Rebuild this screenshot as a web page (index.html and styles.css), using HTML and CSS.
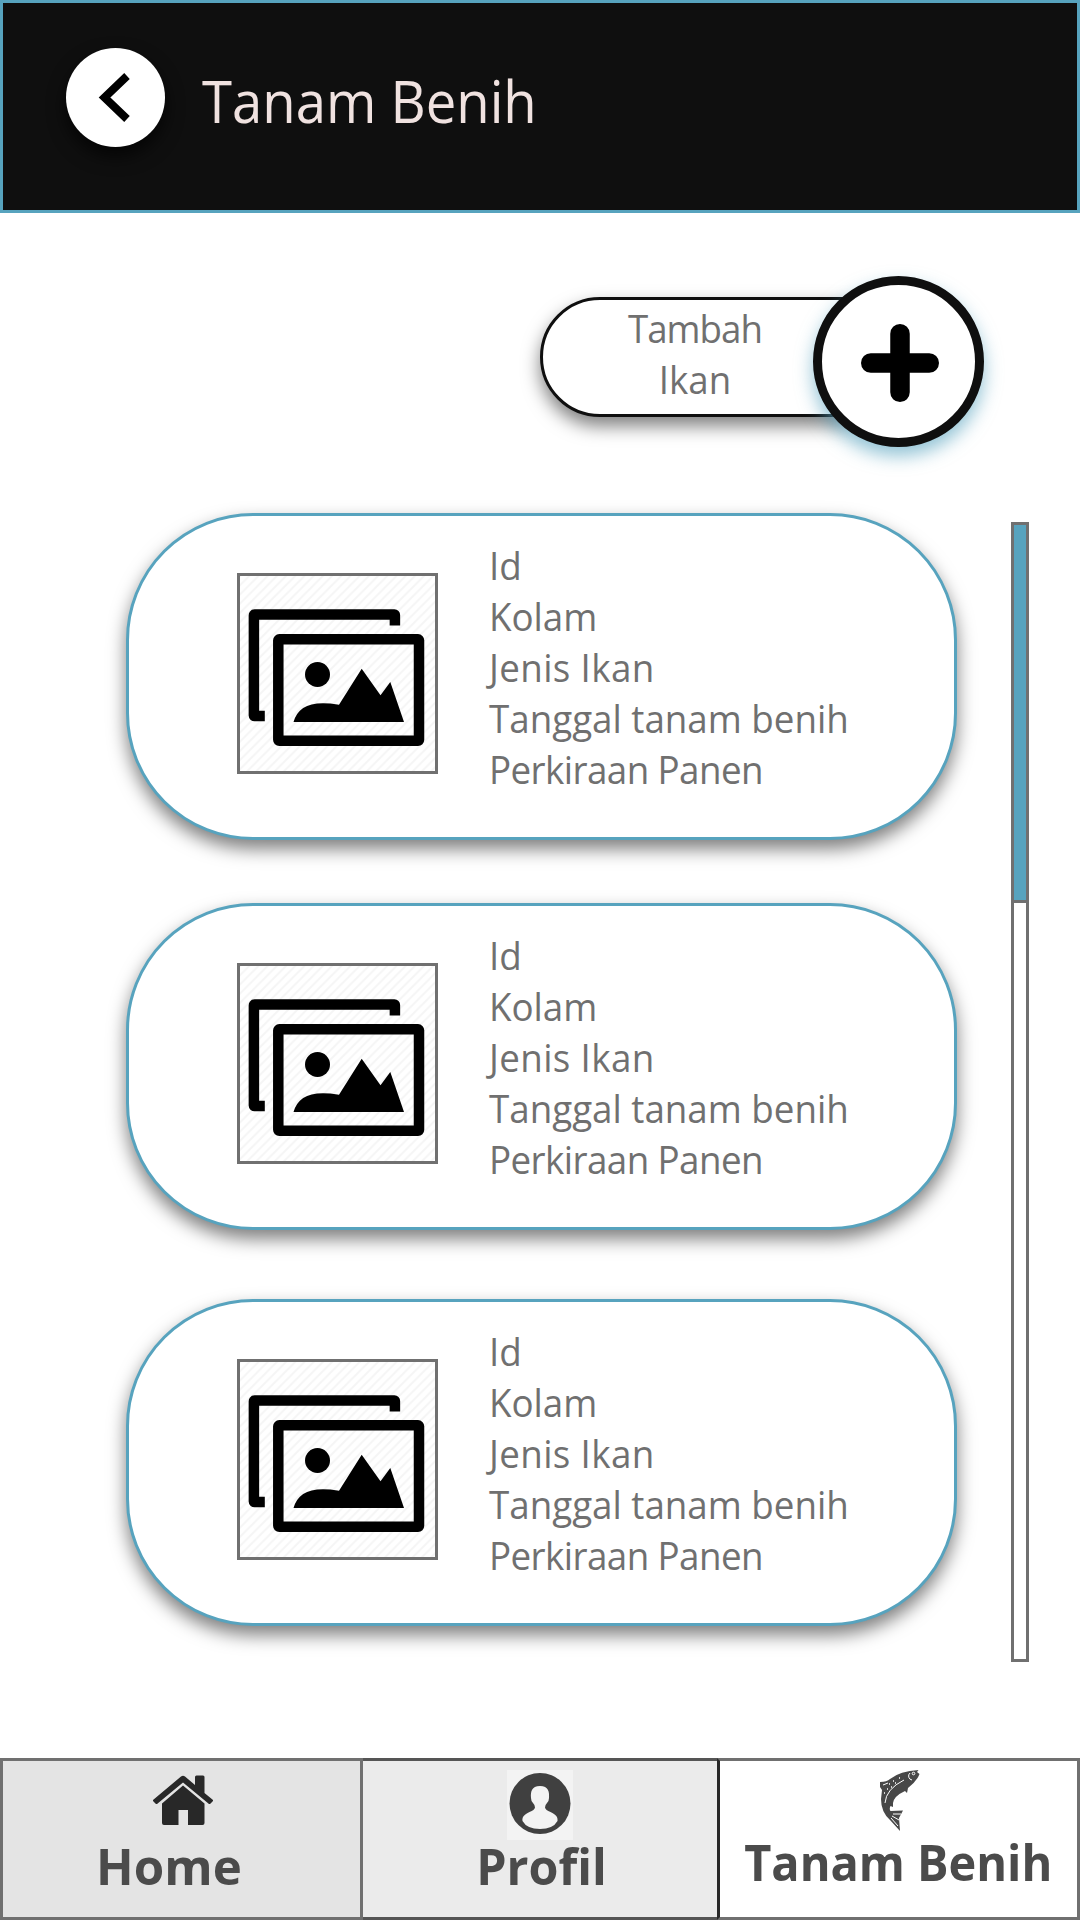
FILE: index.html
```html
<!DOCTYPE html>
<html lang="id">
<head>
<meta charset="utf-8">
<title>Tanam Benih</title>
<link rel="stylesheet" href="styles.css">
</head>
<body>
<svg class="defs" width="0" height="0">
  <defs>
    <pattern id="stripes" width="9.2" height="9.2" patternUnits="userSpaceOnUse">
      <path d="M-2 2L2-2M0 9.2L9.2 0M7.2 11.2L11.2 7.2" stroke="#f5f5f5" stroke-width="2"/>
    </pattern>
    <symbol id="gallery" viewBox="0 0 195 195">
      <rect width="195" height="195" fill="url(#stripes)"/>
      <path d="M154.900 49.500V39Q154.900 38.500 154.400 38.500H14.600Q13.900 38.500 13.900 39.500V139.500Q13.900 140 14.500 140H24.800" fill="none" stroke="#000" stroke-width="10.500" stroke-linejoin="round"/>
      <rect x="38.300" y="63.300" width="140.700" height="101.500" rx="1" fill="none" stroke="#000" stroke-width="10.500" stroke-linejoin="round"/>
      <circle cx="77.500" cy="98.500" r="12.500"/>
      <path d="M53.500 146C57 134 66 127.300 83 127.300Q90 127.300 99 128.700L121.700 92.700L140.500 119.300L150.300 106L164 146Z"/>
    </symbol>
  </defs>
</svg>
<div class="screen">
  <header class="header">
    <button class="back" aria-label="Kembali">
      <svg width="99" height="99" viewBox="0 0 99 99"><path d="M61 28L38.500 49.500L61 71" fill="none" stroke="#000" stroke-width="8"/></svg>
    </button>
    <h1 class="title">Tanam Benih</h1>
  </header>

  <div class="actions">
    <div class="pill"><span class="pill-line tight">Tambah</span><span class="pill-line">Ikan</span></div>
    <button class="add" aria-label="Tambah">
      <svg width="78" height="78" viewBox="0 0 78 78"><path d="M39 9.750V68.250M9.750 39H68.250" stroke="#000" stroke-width="19.500" stroke-linecap="round"/></svg>
    </button>
  </div>

  <main class="content">
    <div class="cards">
      <article class="card">
        <svg class="thumb" viewBox="0 0 195 195"><use href="#gallery"/></svg>
        <ul class="info"><li>Id</li><li>Kolam</li><li class="species">Jenis Ikan</li><li>Tanggal tanam benih</li><li class="harvest">Perkiraan Panen</li></ul>
      </article>
      <article class="card">
        <svg class="thumb" viewBox="0 0 195 195"><use href="#gallery"/></svg>
        <ul class="info"><li>Id</li><li>Kolam</li><li class="species">Jenis Ikan</li><li>Tanggal tanam benih</li><li class="harvest">Perkiraan Panen</li></ul>
      </article>
      <article class="card last">
        <svg class="thumb" viewBox="0 0 195 195"><use href="#gallery"/></svg>
        <ul class="info"><li>Id</li><li>Kolam</li><li class="species">Jenis Ikan</li><li>Tanggal tanam benih</li><li class="harvest">Perkiraan Panen</li></ul>
      </article>
    </div>
    <div class="scrollbar"><div class="scroll-thumb"></div></div>
  </main>

  <nav class="nav">
    <a class="tab home">
      <svg class="icon" width="60" height="51" viewBox="0 0 60 51"><g fill="#282828"><path d="M0 25L28 1.500Q30 0 32 1.500L42 10V2Q42 .5 43.500 .5H50Q51.500 .5 51.500 2V18L60 25V26L57 29H56L30 7.500L4 29H3L0 26Z"/><path d="M30 10.500L51.500 28.500V48Q51.500 50 49.500 50H35V35H25.500V50H11Q9 50 9 48V28.500Z"/></g></svg>
      <span class="label">Home</span>
    </a>
    <a class="tab profil">
      <span class="avatar"><svg width="66" height="70" viewBox="0 0 66 70"><circle cx="33" cy="33.500" r="30.500" fill="#404040"/><path d="M33 16C24.500 16 23.500 22 24 28Q24 31 26 33Q28 35 28 37.500Q27.500 40 22.500 42C17 44.500 15 47 15.500 51Q20 59 33 59Q46 59 50.500 51C51 47 49 44.500 43.500 42Q38.500 40 38 37.500Q38 35 40 33Q42 31 42 28C42.500 22 41.500 16 33 16Z" fill="#f3f3f3"/></svg></span>
      <span class="label">Profil</span>
    </a>
    <a class="tab tanam">
      <svg class="icon" width="40" height="62" viewBox="0 0 40 62"><path d="M38.500 0L37 2L39.500 4Q37 11 28 18L27 23L25 21Q14 26 13 33V37L10.500 36Q9 39 10.500 41L23 40.500L19 48L20 61L10 50Q1 42 1 29L2 20L0 17V12Q7 12 10 9Q20 1 38.500 0Z" fill="#484848"/><path d="M30 3A4 4 0 0 0 32 10M5 33Q6 19 24 10M3 15L8 13M13 44H21M12 46L19 50M11 48L18 56" fill="none" stroke="#fff" stroke-width="1"/><path d="M9 14h1M13 11h1M7 19h1M11 17h1M4 23h1M15 13h1M19 8h1" stroke="#fff" stroke-width="1.500"/><circle cx="33.500" cy="3.500" r="1.300" fill="none" stroke="#fff"/></svg>
      <span class="label">Tanam Benih</span>
    </a>
  </nav>
</div>
</body>
</html>
```
FILE: styles.css
```css
* { box-sizing: border-box; }
body { margin: 0; background: #fff; font-family: "Open Sans", "Noto Sans", sans-serif; color: #707070; }
button { padding: 0; }
svg { display: block; }
.defs { position: absolute; }
.screen { width: 1080px; height: 1920px; display: flex; flex-direction: column; overflow: hidden; }

.header { height: 213px; flex: none; display: flex; align-items: flex-start; background: #0f0f0f; border: 3px solid #57a3be; padding: 45px 0 0 63px; }
.back { width: 99px; height: 99px; border: 0; border-radius: 50%; background: #fff; box-shadow: 0 9px 18px rgba(0,0,0,.7); }
.title { margin: 12px 0 0 37px; font-size: 59px; line-height: 80px; font-weight: 400; color: #f0e2e0; white-space: nowrap; transform: scaleX(.923); transform-origin: left; }

.actions { height: 171px; flex: none; margin-top: 63px; display: flex; align-items: flex-start; padding-left: 540px; }
.pill { width: 310px; height: 120px; margin: 21px -37px 0 0; border: 3px solid #0f0f0f; border-radius: 60px 0 0 60px; background: #fff; box-shadow: 0 9px 18px rgba(0,0,0,.5); padding: 2px 0 0; text-align: center; font-size: 39px; line-height: 51px; }
.pill-line { display: block; transform: scaleX(.94); }
.tight { letter-spacing: -1px; }
.add { position: relative; width: 171px; height: 171px; flex: none; border: 9px solid #0f0f0f; border-radius: 50%; background: #fff; box-shadow: 0 9px 18px rgba(87,163,190,.65); display: flex; align-items: center; justify-content: center; }
.add svg { margin: 3px 0 0 3px; }

.content { margin-top: 66px; display: flex; align-items: flex-start; padding-left: 126px; }
.cards { width: 831px; display: flex; flex-direction: column; gap: 63px; }
.card { height: 327px; border: 3px solid #57a3be; border-radius: 127px; background: #fff; box-shadow: 0 9px 18px rgba(0,0,0,.5); display: flex; align-items: flex-start; padding: 57px 0 0 108px; }
.card.last { margin-top: 6px; }
.thumb { width: 201px; height: 201px; border: 3px solid #707070; flex: none; }
.info { list-style: none; margin: -34px 0 0 51px; padding: 0; font-size: 39px; line-height: 51px; white-space: nowrap; transform: scaleX(.942); transform-origin: left; }
.species { letter-spacing: .4px; }
.harvest { letter-spacing: -.6px; }
.scrollbar { width: 18px; height: 1140px; margin: 9px 0 0 54px; border: 3px solid #707070; background: #fff; }
.scroll-thumb { height: 378px; background: #57a3be; border-bottom: 3px solid #707070; }

.nav { height: 162px; flex: none; margin-top: auto; display: flex; color: #4b4b4b; }
.tab { display: flex; flex-direction: column; align-items: center; border: 3px solid #707070; height: 162px; }
.home { width: 363px; background: #e4e4e4; padding: 14px 0 0 3px; }
.profil { width: 354px; background: #ebebeb; border-color: #555; border-width: 3px 0; padding-top: 9px; }
.tanam { width: 363px; background: #fff; border-left-color: #282828; padding: 9px 0 0; }
.label { font-size: 50px; font-weight: 700; line-height: 60px; white-space: nowrap; }
.home .label { margin: 10px 29px 0 0; transform: scaleX(.985); }
.profil .label { margin: -4px 0 0 3px; transform: scaleX(.968); }
.tanam .icon { margin-left: 2px; }
.tanam .label { transform: scaleX(.938); }
.avatar { background: #f3f3f3; }
```
